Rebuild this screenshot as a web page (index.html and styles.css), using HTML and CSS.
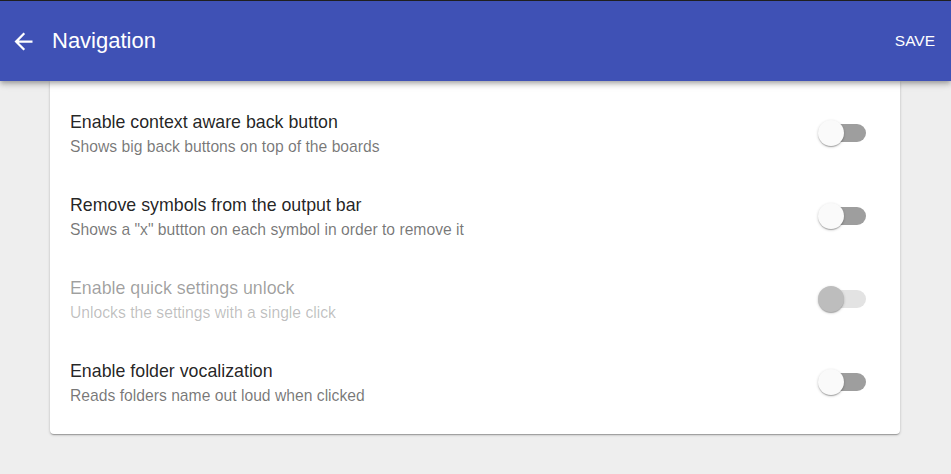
FILE: index.html
```html
<!DOCTYPE html>
<html>
<head>
<meta charset="utf-8">
<link rel="stylesheet" href="styles.css">
</head>
<body>
<header class="appbar">
  <button class="back" aria-label="Back">
    <svg viewBox="0 0 24 24" width="27" height="27"><path fill="#fff" d="M20 11H7.83l5.59-5.59L12 4l-8 8 8 8 1.41-1.41L7.83 13H20v-2z"/></svg>
  </button>
  <h1 class="title">Navigation</h1>
  <button class="save">SAVE</button>
</header>
<main class="content">
  <section class="card">
    <div class="row">
      <div class="text">
        <div class="primary">Enable context aware back button</div>
        <div class="secondary">Shows big back buttons on top of the boards</div>
      </div>
      <span class="switch"><span class="track"></span><span class="thumb"></span></span>
    </div>
    <div class="row">
      <div class="text">
        <div class="primary">Remove symbols from the output bar</div>
        <div class="secondary">Shows a "x" buttton on each symbol in order to remove it</div>
      </div>
      <span class="switch"><span class="track"></span><span class="thumb"></span></span>
    </div>
    <div class="row disabled">
      <div class="text">
        <div class="primary">Enable quick settings unlock</div>
        <div class="secondary">Unlocks the settings with a single click</div>
      </div>
      <span class="switch"><span class="track"></span><span class="thumb"></span></span>
    </div>
    <div class="row">
      <div class="text">
        <div class="primary">Enable folder vocalization</div>
        <div class="secondary">Reads folders name out loud when clicked</div>
      </div>
      <span class="switch"><span class="track"></span><span class="thumb"></span></span>
    </div>
  </section>
</main>
</body>
</html>
```

FILE: styles.css
```css
* { box-sizing: border-box; }
html, body { margin: 0; padding: 0; }
body {
  background: #eeeeee;
  font-family: "Liberation Sans", Arial, sans-serif;
  width: 951px;
  height: 474px;
  overflow: hidden;
}
.appbar {
  position: relative;
  z-index: 2;
  height: 81px;
  border-top: 1px solid #1f1f1f;
  background: #3f51b5;
  color: #fff;
  display: flex;
  align-items: center;
  padding: 0 16px 0 10px;
  box-shadow: 0 2px 4px -1px rgba(0,0,0,0.2), 0 4px 5px 0 rgba(0,0,0,0.14), 0 1px 10px 0 rgba(0,0,0,0.12);
}
.back {
  background: none;
  border: 0;
  padding: 0;
  width: 27px;
  height: 27px;
  display: flex;
  margin-right: 15px;
}
.title {
  margin: 0;
  font-size: 22px;
  font-weight: 400;
  flex: 1;
}
.save {
  background: none;
  border: 0;
  color: #fff;
  font-family: inherit;
  font-size: 15.5px;
  padding: 0;
}
.content {
  padding: 0 51px 0 50px;
}
.card {
  background: #fff;
  border-radius: 0 0 4px 4px;
  box-shadow: 0 1px 3px 0 rgba(0,0,0,0.2), 0 1px 1px 0 rgba(0,0,0,0.14), 0 2px 1px -1px rgba(0,0,0,0.12);
  padding: 12px 34px 9px 20px;
}
.row {
  height: 83px;
  display: flex;
  align-items: center;
}
.text { flex: 1; }
.primary {
  font-size: 17.8px;
  line-height: 22px;
  color: rgba(0,0,0,0.87);
}
.secondary {
  margin-top: 2px;
  font-size: 15.7px;
  line-height: 23px;
  color: rgba(0,0,0,0.54);
}
.disabled .primary { color: rgba(0,0,0,0.38); }
.disabled .secondary { color: rgba(0,0,0,0.26); }
.switch {
  position: relative;
  width: 48px;
  height: 26px;
  margin-bottom: 4px;
  display: block;
}
.track {
  position: absolute;
  left: 4px;
  right: 0;
  top: 4px;
  height: 18px;
  border-radius: 9px;
  background: #9e9e9e;
}
.thumb {
  position: absolute;
  left: 0;
  top: 0;
  width: 26px;
  height: 26px;
  border-radius: 50%;
  background: #fafafa;
  box-shadow: 0 1px 3px 0 rgba(0,0,0,0.2), 0 1px 1px 0 rgba(0,0,0,0.14), 0 2px 1px -1px rgba(0,0,0,0.12);
}
.disabled .track { background: #e3e3e3; }
.disabled .thumb { background: #bdbdbd; }
```
